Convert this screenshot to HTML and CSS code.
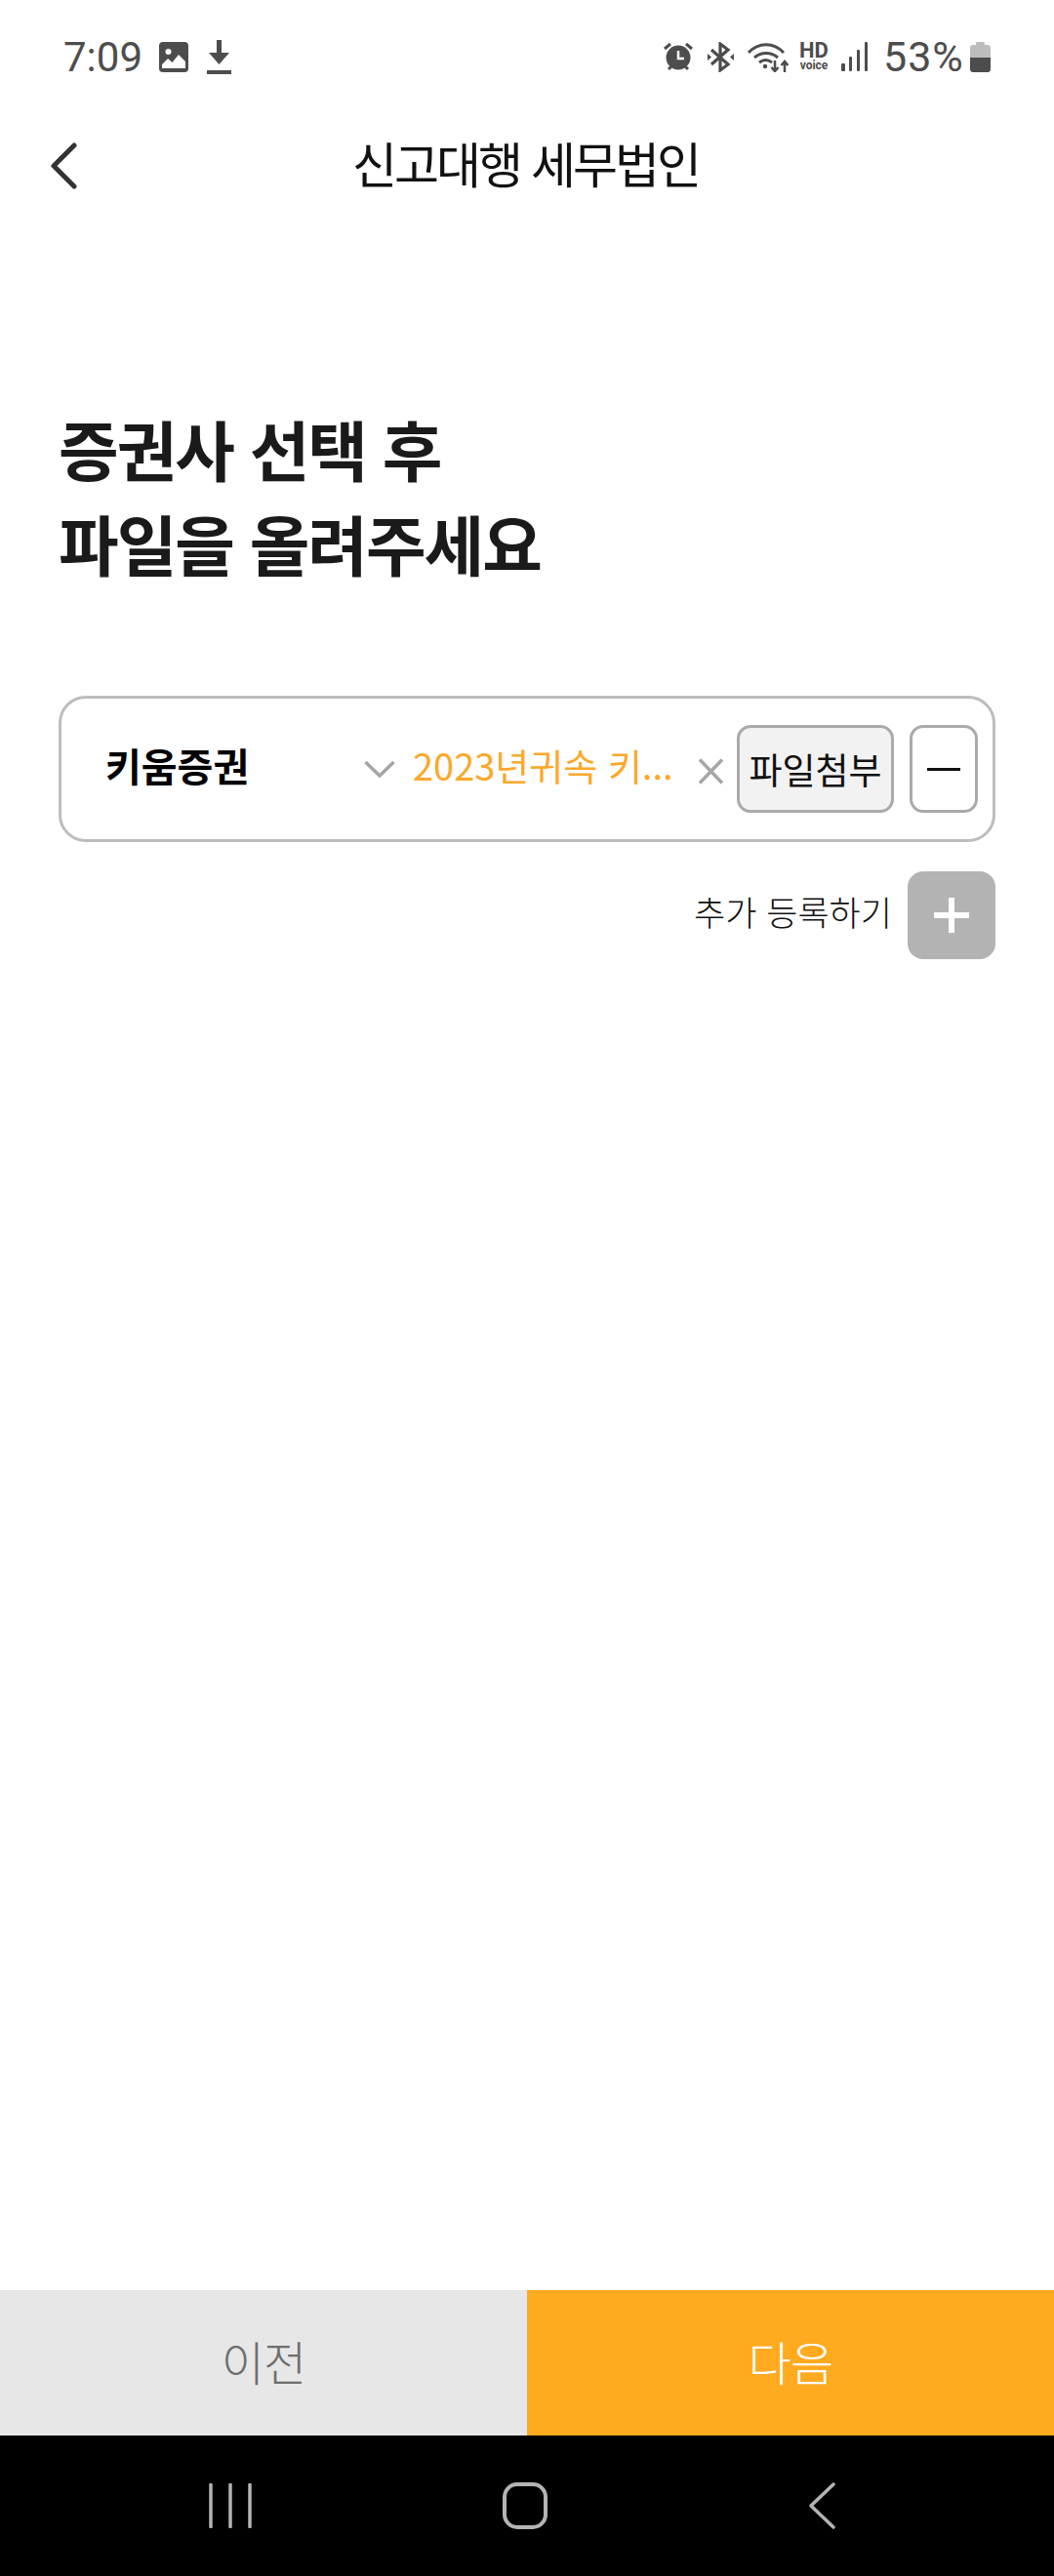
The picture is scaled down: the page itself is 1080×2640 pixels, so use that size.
FILE: index.html
```html
<!DOCTYPE html>
<html lang="ko">
<head>
    <meta charset="UTF-8">
    <meta name="viewport" content="width=device-width, initial-scale=1.0">
    <title>신고대행 세무법인</title>
    <link rel="stylesheet" href="styles.css">
</head>
<body>
    <div class="page">
        <div class="status-bar">
            <div class="status-left">
                <span class="status-time">7:09</span>
                <svg class="icon-image" width="30" height="31" viewBox="0 0 30 31">
                    <rect width="30" height="31" rx="4" fill="#4d4d4d"/>
                    <circle cx="9.5" cy="10" r="3" fill="#fff"/>
                    <path d="M3 27v-4l6-6 4.500 4 6.500-8 7 7v7z" fill="#fff"/>
                </svg>
                <svg class="icon-download" width="25" height="35" viewBox="0 0 25 35">
                    <path d="M10 0h5v13h8L12.500 25 2 13h8z" fill="#4d4d4d"/>
                    <rect y="31" width="25" height="4" fill="#4d4d4d"/>
                </svg>
            </div>
            <div class="status-right">
                <svg width="30" height="30" viewBox="0 0 30 30">
                    <circle cx="15" cy="16" r="12.500" fill="#4d4d4d"/>
                    <path d="M15 9v8h6" fill="none" stroke="#fff" stroke-width="2.500"/>
                    <path d="M1 7l6-5M29 7l-6-5M5 28l3-3M25 28l-3-3" stroke="#4d4d4d" stroke-width="3"/>
                </svg>
                <svg class="icon-bt" width="27" height="31" viewBox="0 0 27 31">
                    <path d="M4 8l17 15-8 6V2l8 6L4 23" fill="none" stroke="#4d4d4d" stroke-width="3.200"/>
                    <path d="M0 12l4 3.500-4 3.500zM27 12l-4 3.500 4 3.500z" fill="#4d4d4d"/>
                </svg>
                <svg class="icon-wifi" width="42" height="31" viewBox="0 0 42 31">
                    <path d="M1 11C11 0 27 0 37 11M7 16c7-6 17-6 24 0M12 21c4-3 9-3 13 0" fill="none" stroke="#4d4d4d" stroke-width="3"/>
                    <circle cx="18" cy="25" r="2.200" fill="#4d4d4d"/>
                    <path d="M28 19v11M24.500 26l3.500 4 3.500-4M38 31V20M34.500 24l3.500-4 3.500 4" fill="none" stroke="#4d4d4d" stroke-width="2.500"/>
                </svg>
                <div class="hd-voice"><span class="hd">HD</span><span class="voice">voice</span></div>
                <svg class="icon-signal" width="28" height="30" viewBox="0 0 28 30">
                    <rect x="0" y="22" width="4" height="8" rx="1" fill="#4d4d4d"/>
                    <rect x="8" y="15" width="3" height="15" rx="1" fill="#4d4d4d"/>
                    <rect x="16" y="8" width="3" height="22" rx="1" fill="#4d4d4d"/>
                    <rect x="24" y="0" width="3" height="30" rx="1" fill="#4d4d4d"/>
                </svg>
                <span class="status-battery">53%</span>
                <svg class="icon-battery" width="21" height="31" viewBox="0 0 21 31">
                    <path d="M6 3V1.500C6 .7 6.700 0 7.500 0h6c.8 0 1.500.7 1.500 1.500V3h3c1.700 0 3 1.300 3 3v10H0V6c0-1.700 1.300-3 3-3z" fill="#bdbdbd"/>
                    <path d="M0 16h21v12c0 1.700-1.300 3-3 3H3c-1.700 0-3-1.300-3-3z" fill="#4d4d4d"/>
                </svg>
            </div>
        </div>

        <div class="top-bar">
            <svg class="back-btn" width="28" height="48" viewBox="0 0 28 48">
                <path d="M25 3L4 24l21 21" fill="none" stroke="#333" stroke-width="5" stroke-linecap="round" stroke-linejoin="round"/>
            </svg>
            <h1 class="top-title">신고대행 세무법인</h1>
        </div>

        <div class="content">
            <h2 class="headline">증권사 선택 후<br>파일을 올려주세요</h2>

            <div class="file-row">
                <div class="broker-select">
                    <span class="broker-name">키움증권</span>
                    <svg width="32" height="18" viewBox="0 0 32 18">
                        <path d="M1.500 2L16 16 30.500 2" fill="none" stroke="#a6a6a6" stroke-width="3.500"/>
                    </svg>
                </div>
                <span class="file-name">2023년귀속 키...</span>
                <svg class="file-remove" width="25" height="27" viewBox="0 0 25 27">
                    <path d="M1 1.500l23 24M24 1.500l-23 24" fill="none" stroke="#a6a6a6" stroke-width="3.500"/>
                </svg>
                <button class="attach-btn">파일첨부</button>
                <button class="minus-btn"><span class="minus-line"></span></button>
            </div>

            <div class="add-row">
                <span class="add-label">추가 등록하기</span>
                <button class="plus-btn">
                    <svg width="36" height="36" viewBox="0 0 36 36">
                        <path d="M18 0v36M0 18h36" stroke="#fff" stroke-width="6"/>
                    </svg>
                </button>
            </div>
        </div>

        <div class="bottom-buttons">
            <button class="prev-btn">이전</button>
            <button class="next-btn">다음</button>
        </div>

        <div class="nav-bar">
            <svg width="44" height="46" viewBox="0 0 44 46">
                <path d="M2 1.500v43M22 1.500v43M42 1.500v43" stroke="#b4b4b4" stroke-width="3.500" stroke-linecap="round"/>
            </svg>
            <svg class="nav-home" width="46" height="48" viewBox="0 0 46 48">
                <rect x="2" y="2" width="42" height="44" rx="13" fill="none" stroke="#b4b4b4" stroke-width="4"/>
            </svg>
            <svg class="nav-back" width="28" height="48" viewBox="0 0 28 48">
                <path d="M26 2L3 24l23 22" fill="none" stroke="#b4b4b4" stroke-width="3.500" stroke-linecap="round" stroke-linejoin="round"/>
            </svg>
        </div>
    </div>
</body>
</html>
```

FILE: styles.css
```css
body {
    margin: 0;
    padding: 0;
    background-color: #fff;
    font-family: "Noto Sans CJK KR", "Noto Sans", sans-serif;
    color: #111;
}

button {
    font-family: inherit;
    padding: 0;
    cursor: pointer;
}

.page {
    width: 1080px;
    height: 2640px;
    display: flex;
    flex-direction: column;
    overflow: hidden;
}

/* Status bar */
.status-bar {
    height: 116px;
    flex: none;
    display: flex;
    justify-content: space-between;
    align-items: center;
    padding: 0 65px 0 65px;
    color: #4d4d4d;
    font-family: Roboto, sans-serif;
}

.status-left,
.status-right {
    display: flex;
    align-items: center;
}

.status-time {
    font-size: 42px;
    width: 98px;
}

.icon-download {
    margin-left: 19px;
}

.status-right svg {
    flex: none;
}

.icon-bt {
    margin-left: 15px;
}

.icon-wifi {
    margin-left: 14px;
}

.hd-voice {
    display: flex;
    flex-direction: column;
    align-items: center;
    width: 32px;
    margin-left: 10px;
    font-weight: 700;
}

.hd {
    font-size: 22px;
    line-height: 18px;
    height: 18px;
}

.voice {
    font-size: 12px;
    line-height: 12px;
    height: 12px;
}

.icon-signal {
    margin-left: 12px;
}

.status-battery {
    width: 80px;
    font-size: 43px;
    letter-spacing: 1px;
    margin-left: 15px;
}

.icon-battery {
    margin-left: 9px;
}

/* Header */
.top-bar {
    height: 104px;
    flex: none;
    display: flex;
    align-items: center;
    justify-content: center;
    position: relative;
}

.back-btn {
    position: absolute;
    left: 51px;
    top: 30px;
}

.top-title {
    margin: 0 3px 4px 0;
    font-size: 50px;
    letter-spacing: -3px;
    font-weight: 400;
    color: #111;
}

/* Content */
.content {
    flex: 1;
    padding: 0 60px 0 60px;
}

.headline {
    margin: 190px 0 109px 0;
    font-size: 67px;
    letter-spacing: -2px;
    line-height: 97px;
    font-weight: 700;
    color: #1a1a1a;
}

.file-row {
    box-sizing: border-box;
    height: 150px;
    display: flex;
    align-items: center;
    padding: 0 15px 0 45px;
    border: 3px solid #bdbdbd;
    border-radius: 28px;
}

.broker-select {
    width: 297px;
    flex: none;
    display: flex;
    align-items: center;
    justify-content: space-between;
}

.broker-name {
    padding-bottom: 8px;
    font-size: 40px;
    font-weight: 700;
    color: #000;
}

.file-name {
    width: 293px;
    flex: none;
    margin-left: 18px;
    padding-bottom: 10px;
    font-size: 38px;
    color: #fba82c;
    white-space: nowrap;
}

.file-remove {
    flex: none;
    margin-top: 4px;
}

.attach-btn {
    width: 161px;
    height: 90px;
    flex: none;
    margin-left: 14px;
    background-color: #f2f2f2;
    border: 3px solid #aaa;
    border-radius: 14px;
    font-size: 37px;
    color: #111;
}

.minus-btn {
    width: 70px;
    height: 90px;
    flex: none;
    margin-left: 16px;
    display: flex;
    align-items: center;
    justify-content: center;
    background-color: #fff;
    border: 3px solid #aaa;
    border-radius: 14px;
}

.minus-line {
    display: block;
    width: 34px;
    height: 3px;
    background-color: #111;
}

.add-row {
    display: flex;
    justify-content: flex-end;
    align-items: center;
    margin-top: 30px;
}

.add-label {
    padding-bottom: 10px;
    font-size: 35px;
    font-weight: 300;
    color: #111;
}

.plus-btn {
    width: 90px;
    height: 90px;
    margin-left: 16px;
    display: flex;
    align-items: center;
    justify-content: center;
    background-color: #b3b3b3;
    border: none;
    border-radius: 16px;
}

/* Bottom buttons */
.bottom-buttons {
    height: 149px;
    flex: none;
    display: flex;
}

.prev-btn,
.next-btn {
    flex: 1;
    border: none;
    padding-bottom: 6px;
    font-size: 48px;
    letter-spacing: -1px;
    font-weight: 300;
}

.prev-btn {
    background-color: #e7e7e7;
    color: #6e6e6e;
}

.next-btn {
    background-color: #ffaa1f;
    color: #fff;
}

/* System navigation */
.nav-bar {
    height: 144px;
    flex: none;
    background-color: #000;
    display: flex;
    align-items: center;
    padding-left: 214px;
}

.nav-home {
    margin-left: 257px;
}

.nav-back {
    margin-left: 267px;
}
```
